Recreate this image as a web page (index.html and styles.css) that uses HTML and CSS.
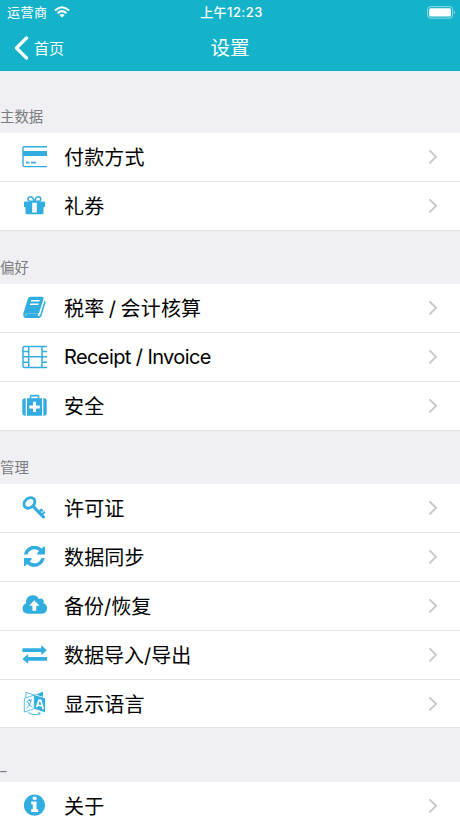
FILE: index.html
```
<!DOCTYPE html>
<html lang="zh-CN">
<head>
<meta charset="utf-8">
<title>设置</title>
<link rel="stylesheet" href="styles.css">
</head>
<body>
<svg class="defs" aria-hidden="true"><symbol id="chev" viewBox="0 0 10 16"><path d="M1.500 1.300 8 7.800l-6.500 6.500" fill="none" stroke="#c7c7cc" stroke-width="1.900"/></symbol></svg>
<header class="top">
  <div class="status">
    <div class="carrier"><span>运营商</span>
      <svg width="16" height="12" viewBox="0 0 16 12" fill="none" stroke="#fff" stroke-width="2"><path d="M1 4.500Q8-1.900 15 4.500M3.500 7.200Q8 3.100 12.500 7.200"/><path d="M5.500 9Q8 6.900 10.500 9L8 11.500z" fill="#fff" stroke="none"/></svg>
    </div>
    <div class="time">上午12:23</div>
    <svg class="battery" width="29" height="13" viewBox="0 0 29 13"><rect x=".6" y=".6" width="25" height="11.500" rx="3" fill="none" stroke="#fff" stroke-opacity=".55"/><rect x="2.200" y="2.200" width="21.800" height="8.300" rx="1.500" fill="#fff"/><path d="M27 4.500q2 1.800 0 3.700z" fill="#fff" fill-opacity=".6"/></svg>
  </div>
  <nav class="nav">
    <a class="back"><svg width="15" height="24" viewBox="0 0 15 24"><path d="M12.500 2 2.500 12l10 10" fill="none" stroke="#fff" stroke-width="3.200" stroke-linecap="round" stroke-linejoin="round"/></svg><span>首页</span></a>
    <h1>设置</h1>
  </nav>
</header>
<main>
  <section>
    <h2 class="first">主数据</h2>
    <ul>
      <li><svg class="icon" viewBox="0 0 26 26"><path d="M25 2.700H2.200Q1 2.700 1 4v17q0 1.600 1.500 1.600H25" fill="none" stroke="#32ade0" stroke-width="1.400"/><path d="M1 7h24v5H1zM4 17.800h3.500v1.600H4zM9 17.800h5v1.600H9z"/></svg><span>付款方式</span><svg class="chev"><use href="#chev"/></svg></li>
      <li><svg class="icon" viewBox="0 0 26 26"><path d="M12.300 8.300H8.800Q6 8 6 5.900q.2-2.200 2.500-2.200 1.500 0 2.400 1.500zm.2 0H16Q18.800 8 18.800 5.900q-.2-2.200-2.500-2.200-1.500 0-2.400 1.500z" fill="none" stroke="#32ade0" stroke-width="1.500"/><path d="M3 8.500h19q1 0 1 1V14h-1.500v6q0 1.200-1.300 1.200H4.800q-1.300 0-1.300-1.200v-6H2V9.500q0-1 1-1z"/><path d="M10.200 9.800h4.600v9.600h-4.600z" fill="#fff"/></svg><span>礼券</span><svg class="chev"><use href="#chev"/></svg></li>
    </ul>
  </section>
  <section>
    <h2>偏好</h2>
    <ul>
      <li><svg class="icon" viewBox="0 0 26 26"><path d="M8.500 1.700h11.600q2 0 1.400 2.100l-4.100 13.100q-.5 1.500-2 1.500H4.200q-1.300 0-1.200 1 .1 1.500 2 1.500h11.400q1.400 0 1.900-1.500L22.500 5.500q1.500.7 1 2.300l-4 13q-.7 2.200-2.900 2.200H4.500Q1.300 23 1.200 19.400q0-1.200.8-3.100L5.800 4Q6.600 1.700 8.500 1.700z"/><path d="M4 18.400h12.500l-.8 2.500H5q-2-.2-1.800-2.100z"/><path d="M9.300 5h8.500l-.5 1.500H8.800zm-1.100 3.500h8.500l-.5 1.500H7.700z" fill="#fff"/></svg><span class="spaced">税率 / 会计核算</span><svg class="chev"><use href="#chev"/></svg></li>
      <li><svg class="icon line" viewBox="0 0 26 26" stroke-width="1.500"><path d="M25 2.400H2.500Q1 2.400 1 4v18q0 1.600 1.500 1.600H25M6.700 2.400v21.200M20 2.400v21.200M6.700 12.700H20M1 7.500h5.700M1 12.700h5.700M1 18.200h5.700M20 7.500h5M20 12.700h5M20 18.200h5"/></svg><span class="latin">Receipt / Invoice</span><svg class="chev"><use href="#chev"/></svg></li>
      <li><svg class="icon" viewBox="0 0 26 26"><path d="M3.700 5.300v17.400H3Q.3 22.700.3 20V8Q.3 5.300 3 5.300zM21.300 5.300v17.400h.7q2.700 0 2.700-2.700V8Q24.700 5.300 22 5.300zM5 5.300h2.700V3.200q0-1.500 1.500-1.500h6.600q1.500 0 1.500 1.500v2.100H20v17.400H5zM9.300 3.500v1.800h6.400V3.500z" fill-rule="evenodd"/><path d="M11 8.800h3v3.600h3.700v3H14V19h-3v-3.600H7.300v-3H11z" fill="#fff"/></svg><span>安全</span><svg class="chev"><use href="#chev"/></svg></li>
    </ul>
  </section>
  <section>
    <h2>管理</h2>
    <ul class="manage">
      <li><svg class="icon line" viewBox="0 0 26 26"><ellipse cx="7.400" cy="7.900" rx="6" ry="4.700" transform="rotate(-43 7.400 7.900)" stroke-width="2.800"/><path d="M11 11.200 21.300 21.900" stroke-width="3.200" stroke-linecap="round"/><path d="m16.800 17.200 3-3M19.500 20l3.300-3.200M18.800 14.300l2 2" stroke-width="2"/></svg><span>许可证</span><svg class="chev"><use href="#chev"/></svg></li>
      <li><svg class="icon" viewBox="0 0 26 26"><svg x="1.800" y="1.700" width="21.200" height="21.200" viewBox="0 128 1536 1536"><path d="M1511 1056q0 5-1 7-64 268-268 434.500t-478 166.500q-146 0-282.500-55t-243.500-157l-129 129q-19 19-45 19t-45-19-19-45v-448q0-26 19-45t45-19h448q26 0 45 19t19 45-19 45l-137 137q71 66 161 102t187 36q134 0 250-65t186-179q11-17 53-117 8-23 30-23h192q13 0 22.500 9.500t9.500 22.500zm25-800v448q0 26-19 45t-45 19h-448q-26 0-45-19t-19-45 19-45l138-138q-148-137-349-137-134 0-250 65t-186 179q-11 17-53 117-8 23-30 23h-199q-13 0-22.500-9.500t-9.500-22.500v-7q65-268 270-434.500t480-166.500q146 0 284 55.500t245 156.500l130-129q19-19 45-19t45 19 19 45z"/></svg></svg><span>数据同步</span><svg class="chev"><use href="#chev"/></svg></li>
      <li><svg class="icon" viewBox="0 0 26 26"><path d="M6 20.700q-5.300-.3-5.500-5.400.1-3.500 3.500-5Q3.600 5.800 6.700 3.500q3-2.100 6.500-.9 2.700 1 3.800 3.600 2-1.300 3.800.1 1.700 1.600.8 3.900 3.400 1.200 3.500 5-.3 5.200-5.300 5.500z"/><path d="m12.300 7.200 5.200 5.600h-3.300v5h-3.800v-5H7.200z" fill="#fff"/></svg><span class="slash">备份/恢复</span><svg class="chev"><use href="#chev"/></svg></li>
      <li><svg class="icon" viewBox="0 0 26 26"><path d="M.4 6.300h18.800V3.300l5.800 4.900-5.800 4.900v-3H.4zM25 14.900H6.200v-3L.4 16.900l5.800 4.900v-3H25z"/></svg><span class="slash">数据导入/导出</span><svg class="chev"><use href="#chev"/></svg></li>
      <li><svg class="icon" viewBox="0 0 26 26"><path d="M12.500 4.200 21 .5v5.400L12.500 3z"/><path d="M12.300 4 23 7.300v14l-10.700-3.500z"/><path d="M4 6.800V1.300l8.300 2.900v13.600L2.300 21V7.500l10-3.500" fill="none" stroke="#32ade0" stroke-width=".8"/><path d="m4.500 10.300 5.500-1.500M7 7.700l.5 1.700M9 9.300q-1 5.500-4.500 8M5.500 10.700q1.300 4 5 5.300M6 21.500q6 3.800 12 .8m-1.800-.6 2 .5-.7 1.500" fill="none" stroke="#32ade0" stroke-width=".9"/><path d="m14.500 16.300 2.500-7h1.800l2.500 8.900M15.300 14l4.700 1" fill="none" stroke="#fff" stroke-width="1.700"/></svg><span>显示语言</span><svg class="chev"><use href="#chev"/></svg></li>
    </ul>
  </section>
  <section>
    <h2 class="last">_</h2>
    <ul>
      <li><svg class="icon" viewBox="0 0 26 26"><circle cx="12.500" cy="12.200" r="10.600"/><path d="M10.800 3.700h3.700v3.100h-3.700zM9.200 8.500h5.300v7.800h1.700V19H9.200v-2.700h1.600v-5.100H9.200z" fill="#fff"/></svg><span>关于</span><svg class="chev"><use href="#chev"/></svg></li>
    </ul>
  </section>
</main>
</body>
</html>
```
FILE: styles.css
```
* { box-sizing: border-box; }
html, body { height: 100%; }
body {
  margin: 0;
  display: flex;
  flex-direction: column;
  overflow: hidden;
  background: #efeff4;
  color: #000;
  font-family: Inter, "Noto Sans CJK SC", sans-serif;
}
.defs { display: none; }
.top {
  flex: none;
  height: 71px;
  background: #15b3ca;
  color: #fff;
}
.status {
  display: grid;
  grid-template-columns: 1fr auto 1fr;
  align-items: center;
  height: 24px;
  padding: 0 4px 0 7px;
  font-size: 13px;
  line-height: 24px;
}
.carrier { display: flex; align-items: center; gap: 6px; letter-spacing: .5px; }
.time { font-weight: 500; letter-spacing: .45px; }
.battery { justify-self: end; }
.nav {
  display: grid;
  grid-template-columns: 1fr auto 1fr;
  align-items: center;
  height: 47px;
}
.back {
  display: flex;
  align-items: center;
  gap: 5px;
  padding-left: 14px;
  font-size: 15px;
}
h1 { margin: 0; padding-top: 1px; font-size: 19.500px; font-weight: 400; line-height: 46px; }
main { flex: none; }
h2 {
  height: 53px;
  margin: 0;
  padding-top: 26px;
  font-size: 14.400px;
  font-weight: 400;
  line-height: 22px;
  color: #7b7b80;
}
h2.first { height: 62px; padding-top: 35px; }
h2.last { height: 54px; padding-top: 27px; }
ul { margin: 0; padding: 0; list-style: none; background: #fff; }
li {
  display: flex;
  align-items: center;
  height: 49px;
  padding: 0 22px;
  border-bottom: 1px solid #e2e2e5;
  font-size: 20px;
  letter-spacing: .15px;
  line-height: 46px;
}
li span { padding-top: 2px; }
.manage li:last-child { height: 48px; }
.icon { width: 26px; height: 26px; margin-right: 16px; fill: #32ade0; flex: none; }
.icon.line { fill: none; stroke: #32ade0; }
li .latin { padding-top: 0; letter-spacing: -.6px; }
.spaced { word-spacing: -1.300px; }
.slash { letter-spacing: 0; }
.chev { width: 10px; height: 16px; margin-left: auto; }
```
